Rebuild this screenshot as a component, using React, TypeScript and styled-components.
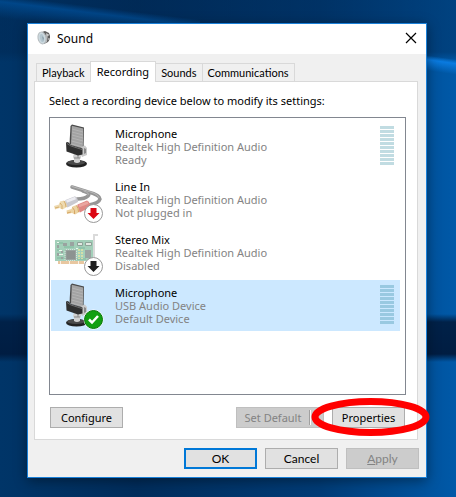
import React, { useState } from "react";
import styled, { createGlobalStyle, css } from "styled-components";

const GlobalStyle = createGlobalStyle`
  *, *::before, *::after { box-sizing: border-box; }
  body {
    margin: 0;
    font-family: "Noto Sans", "Open Sans", sans-serif;
    font-size: 11px;
    color: #000;
  }
  button { font: inherit; color: inherit; }
`;

const Desktop = styled.main`
  display: flex;
  min-height: 100vh;
  padding: 23px 29px 19px 27px;
  background:
    linear-gradient(187deg, transparent 36%, rgba(0, 100, 190, 0.45) 48%, transparent 78%) 0 0 / 200px 30px no-repeat,
    linear-gradient(to bottom, transparent 314px, #002148 322px, #001d42 354px, transparent 362px),
    linear-gradient(188deg, transparent 32%, #0a7be0 44%, transparent 75%) 100% 48px / 40px 30px no-repeat,
    linear-gradient(to bottom, rgba(0, 38, 80, 0.45) 0, rgba(0, 38, 80, 0.45) 52px, transparent 62px),
    linear-gradient(to right, #003568 0%, #002d5c 30%, #003c77 70%, #0059a8 100%);
`;

const Dialog = styled.section`
  display: flex;
  flex: 1;
  flex-direction: column;
  min-width: 0;
  border: 1px solid #1a80d8;
  background: #f0f0f0;
  box-shadow: 0 3px 12px rgba(0, 0, 0, 0.4);
`;

const TitleBar = styled.header`
  display: flex;
  align-items: center;
  height: 30px;
  padding: 0 8px 2px 9px;
  background: #fff;
`;

const Title = styled.h1`
  flex: 1;
  margin: 2px 0 0 6px;
  font-size: 12px;
  font-weight: 400;
  line-height: 16px;
`;

const CloseButton = styled.button`
  display: grid;
  place-items: center;
  width: 14px;
  height: 14px;
  padding: 0;
  border: 0;
  background: none;
`;

const Content = styled.div`
  display: flex;
  flex: 1;
  flex-direction: column;
  padding: 7px 7px 8px 6px;
`;

const TabStrip = styled.div`
  display: flex;
  align-items: flex-end;
  height: 20px;
  padding-left: 2px;
`;

const Tab = styled.button<{ $active: boolean }>`
  height: 18px;
  padding: 0 5px;
  border: 1px solid #d9d9d9;
  border-bottom: 0;
  background: #f0f0f0;
  font-family: Lato, sans-serif;
  line-height: 18px;
  white-space: nowrap;

  & + & { border-left: 0; }

  ${({ $active }) =>
    $active &&
    css`
      && { border-left: 1px solid #d9d9d9; }
      z-index: 1;
      height: 21px;
      margin-bottom: -1px;
      margin-left: -1px;
      padding: 0 6px;
      background: #fff;
      font-family: "Noto Sans", sans-serif;
    `}
`;

const Panel = styled.div`
  display: flex;
  flex: 1;
  flex-direction: column;
  margin-right: 1px;
  padding: 11px 11px 11px 14px;
  border: 1px solid #d9d9d9;
  background: #fff;
`;

const Prompt = styled.p`
  margin: 0;
  line-height: 16px;
`;

const DeviceList = styled.ul`
  display: flex;
  flex: 1;
  flex-direction: column;
  gap: 2px;
  margin: 8px 0 12px;
  padding: 3px 5px 3px 1px;
  border: 1px solid #828790;
  list-style: none;
`;

const Device = styled.li<{ $selected: boolean }>`
  display: flex;
  height: 51px;
  padding: 2px 6px 0 3px;
  background: ${({ $selected }) => ($selected ? "#cce8ff" : "transparent")};
`;

const DeviceIcon = styled.svg`
  flex: none;
  width: 50px;
  height: 48px;
`;

const DeviceText = styled.div`
  flex: 1;
  margin: 4px 0 0 11px;
  color: #838383;
  line-height: 13px;
`;

const DeviceName = styled.div`
  color: #000;
`;

const Meter = styled.div<{ $selected: boolean }>`
  display: flex;
  flex-direction: column;
  gap: 1px;
  width: 14px;
  margin-top: 3px;

  span {
    height: 3px;
    background: ${({ $selected }) => ($selected ? "#99c9e1" : "#c1dce2")};
  }
`;

const Actions = styled.div`
  display: flex;
  padding: 0 1px;
`;

const Footer = styled.footer`
  display: flex;
  justify-content: flex-end;
  gap: 8px;
  margin-top: 8px;
`;

const PushButton = styled.button<{ $primary?: boolean }>`
  width: 73px;
  height: 21px;
  padding: 0;
  border: ${({ $primary }) => ($primary ? "2px solid #0078d7" : "1px solid #adadad")};
  background: #e1e1e1;
  line-height: 17px;
  white-space: nowrap;

  &:disabled {
    border-color: #bfbfbf;
    background: #ccc;
    color: #838383;
  }

  ${Footer} & {
    font-family: Lato, sans-serif;
    font-size: 12px;
  }
`;

const SplitButton = styled.div`
  display: flex;
  margin: 0 8px 0 auto;
`;

const SplitMain = styled(PushButton)`
  border-right: 0;
`;

const SplitArrow = styled(PushButton)`
  width: 15px;
  border-left: 0;

  &:disabled {
    background: linear-gradient(#a0a0a0, #a0a0a0) 0 2px / 1px 15px no-repeat,
      linear-gradient(#fff, #fff) 1px 2px / 1px 15px no-repeat, #ccc;
  }
`;

const Highlighted = styled.div`
  position: relative;
`;

const Ring = styled.svg`
  position: absolute;
  top: -9px;
  left: -21px;
  width: 119px;
  height: 38px;
  overflow: visible;
  pointer-events: none;
`;

function SpeakerIcon() {
  return (
    <svg width="14" height="16" viewBox="0 0 14 16" aria-hidden="true">
      <path d="M5 2L8 1L12 3L13 6V9L11 12L7 14Z" fill="#5c5c5c" />
      <path d="M9 3L11 4L10 12L8 13Z" fill="#b5b5b5" />
      <path d="M11 4V6M12 8V10" stroke="#e4e4e4" />
      <ellipse cx="5" cy="8" rx="4" ry="6" transform="rotate(-12 5 8)" fill="#ccd9df" stroke="#b5bbbe" />
      <ellipse cx="5" cy="8" rx="2" ry="4" transform="rotate(-12 5 8)" fill="#b3c5ce" />
      <path d="M5 6L7 8L6 11Z" fill="#8ba0aa" />
    </svg>
  );
}

function MicrophoneArt() {
  return (
    <g>
      <ellipse cx="22.5" cy="40.8" rx="10.5" ry="3.8" fill="#222" />
      <ellipse cx="22" cy="39.6" rx="9" ry="2.3" fill="#4a4a4a" />
      <path d="M20 30H27V35L26 36V39Q23 41 20 39V36L19 34Z" fill="#d0d0d0" />
      <path d="M20 35H26M24 31V35" stroke="#888" />
      <path d="M15.5 21L16.5 3L18 1.5L30 4.5V6L29.5 26Z" fill="#4a4a4a" />
      <path d="M17.8 2.8L29.3 5.6L28.8 25.5L17 22Z" fill="#a3a3a3" />
      <path d="M18 6L29 9M18 9L29 12M18 12L29 15M18 15L29 18M17.5 18L28.5 21M17.5 21L28.5 24" stroke="#b4b4b4" strokeWidth="1" />
      <path d="M27.5 24L31 22.5L33 25V32L28 34L26.5 31Z" fill="#c9c9c9" />
      <path d="M30 25L32 26V30L30 31Z" fill="#888" />
      <path d="M12 19.5L14 19L17 22L28.5 25.5V31.5L24 32.5L12.5 28.5Z" fill="#2f2f2f" />
      <path d="M13 20.5L17 23L28 26.5" fill="none" stroke="#6b6b6b" />
    </g>
  );
}

function RcaArt() {
  return (
    <g>
      <g fill="none" strokeLinecap="round">
        <path d="M18 11L34 16Q46 19 46 23Q45 27 35 29" stroke="#969696" strokeWidth="3.5" />
        <path d="M29 15Q37 17 34 20Q31 23 23 23" stroke="#969696" strokeWidth="3.5" />
        <path d="M18 10.5L35 15.5Q44 18 45 21.5M30 15Q36 17 34 19" stroke="#b8b8b8" />
      </g>
      <path d="M11.5 24L21 20.3Q24 22 24 26L13.5 31.5Q10 29 11.5 24Z" fill="#c9c9d0" />
      <path d="M12.5 25.5L21.5 22" stroke="#ededf2" strokeWidth="2.5" />
      <path d="M0 30L5 28.5L6 25.5L10 24.5Q13 27 13 31L8.5 33.5L5.5 32L1 33.5Z" fill="#eedab0" />
      <path d="M6 27Q9 29 8 33M10 25Q12 28 12 31M1 32L5 31" fill="none" stroke="#d6ae6c" />
      <path d="M23.5 28.5L33 24.5Q36.5 26 36 31L26 36.5Q22 34 23.5 28.5Z" fill="#df8884" />
      <path d="M25 30L34 26.5" stroke="#eaa6a0" strokeWidth="2.5" />
      <path d="M12.5 34.5L17.5 33L18.5 30.5L22.5 29Q25.5 32 25.5 36L21 38.5L18 37L13 38Z" fill="#ecd3a2" />
      <path d="M18.5 31.5Q21.5 34 20.5 38M22.5 29.5Q24.5 32 24.5 36M13 37L17 36" fill="none" stroke="#d6a665" />
    </g>
  );
}

function SoundCardArt() {
  return (
    <g>
      <path d="M1 11H40V31L37 32H1Z" fill="#a3cfb9" />
      <path d="M3 14H9M10 18H20M3 21H6M3 29H11M23 30H32M25 19H31" stroke="#7fb89c" />
      <path d="M4 32H30V35H4Z" fill="#e8c7a0" />
      <path d="M6.5 32V35M15.5 32V35M24.5 32V35" stroke="#fbf0e4" />
      <path d="M40 31V6H44" fill="none" stroke="#dadada" strokeWidth="2" />
      <g fill="#9aa3a0">
        <path d="M11.5 21H22V31H11.5ZM31 21H37V29H31ZM9 14H13V17H9ZM16 13H20V17H16Z" />
        <path d="M3 16H5V19H3ZM3 24H5V27H3ZM7 22H9V24H7ZM7 28H9V30H7Z" />
      </g>
      <path d="M12.5 22H21V30H12.5Z" fill="#8d9391" />
      <path d="M11 22V31M22.5 22V31M12 20.5H22M12 31.5H22" stroke="#d7e3dc" strokeDasharray="1 1" />
      <path d="M23.5 13.5H28.5V16.5H23.5ZM31.5 13.5H37.5V16.5H31.5Z" fill="#e3e8e2" stroke="#8da398" />
      <path d="M25 20V30M28 20V30" stroke="#d5dfa9" strokeWidth="2" strokeDasharray="2 1" />
      <path d="M5 21.5H8M5 25.5H9M3 13.5H5M22 19.5H24" stroke="#eef8ee" />
    </g>
  );
}

function ArrowBadge({ color }: { color: string }) {
  return (
    <g>
      <circle cx="39.5" cy="37.5" r="9" fill="#fff" stroke="#999" />
      <path d="M36.5 32H42.5V37H45.5L39.5 43L33.5 37H36.5Z" fill={color} />
    </g>
  );
}

function CheckBadge() {
  return (
    <g>
      <circle cx="39.5" cy="37.5" r="10" fill="#fff" />
      <circle cx="39.5" cy="37.5" r="9" fill="#12a012" stroke="#08780b" />
      <path d="M35 37.5L38 40.5L44 34" fill="none" stroke="#fff" strokeWidth="2.5" />
    </g>
  );
}

const devices = [
  { name: "Microphone", driver: "Realtek High Definition Audio", status: "Ready", art: <MicrophoneArt />, badge: null, meter: true },
  { name: "Line In", driver: "Realtek High Definition Audio", status: "Not plugged in", art: <RcaArt />, badge: <ArrowBadge color="#dc0714" />, meter: false },
  { name: "Stereo Mix", driver: "Realtek High Definition Audio", status: "Disabled", art: <SoundCardArt />, badge: <ArrowBadge color="#202020" />, meter: false },
  { name: "Microphone", driver: "USB Audio Device", status: "Default Device", art: <MicrophoneArt />, badge: <CheckBadge />, meter: true },
];

const tabs = ["Playback", "Recording", "Sounds", "Communications"];
const segments = Array.from({ length: 10 }, (_, i) => i);

export default function App() {
  const [tab, setTab] = useState("Recording");
  const [selected, setSelected] = useState(3);

  return (
    <>
      <GlobalStyle />
      <Desktop>
        <Dialog role="dialog" aria-labelledby="dialog-title">
          <TitleBar>
            <SpeakerIcon />
            <Title id="dialog-title">Sound</Title>
            <CloseButton aria-label="Close">
              <svg width="12" height="12" viewBox="0 0 12 12" aria-hidden="true">
                <path d="M1 1L11 11M11 1L1 11" stroke="#000" strokeWidth="1.2" />
              </svg>
            </CloseButton>
          </TitleBar>
          <Content>
            <TabStrip role="tablist">
              {tabs.map((name) => (
                <Tab key={name} role="tab" aria-selected={tab === name} $active={tab === name} onClick={() => setTab(name)}>
                  {name}
                </Tab>
              ))}
            </TabStrip>
            <Panel role="tabpanel">
              <Prompt id="prompt">Select a recording device below to modify its settings:</Prompt>
              <DeviceList role="listbox" aria-labelledby="prompt">
                {devices.map((d, i) => (
                  <Device key={i} role="option" aria-selected={i === selected} $selected={i === selected} onClick={() => setSelected(i)}>
                    <DeviceIcon viewBox="0 0 50 48" aria-hidden="true">
                      {d.art}
                      {d.badge}
                    </DeviceIcon>
                    <DeviceText>
                      <DeviceName>{d.name}</DeviceName>
                      <div>{d.driver}</div>
                      <div>{d.status}</div>
                    </DeviceText>
                    {d.meter && (
                      <Meter $selected={i === selected}>
                        {segments.map((s) => (
                          <span key={s} />
                        ))}
                      </Meter>
                    )}
                  </Device>
                ))}
              </DeviceList>
              <Actions>
                <PushButton>Configure</PushButton>
                <SplitButton>
                  <SplitMain disabled>Set Default</SplitMain>
                  <SplitArrow disabled aria-label="More default options" />
                </SplitButton>
                <Highlighted>
                  <PushButton>Properties</PushButton>
                  <Ring viewBox="0 0 119 38" aria-hidden="true">
                    <ellipse cx="59.5" cy="19" rx="55.5" ry="15.5" fill="none" stroke="#f00" strokeWidth="7" />
                  </Ring>
                </Highlighted>
              </Actions>
            </Panel>
            <Footer>
              <PushButton $primary>OK</PushButton>
              <PushButton>Cancel</PushButton>
              <PushButton disabled>
                <u>A</u>pply
              </PushButton>
            </Footer>
          </Content>
        </Dialog>
      </Desktop>
    </>
  );
}
